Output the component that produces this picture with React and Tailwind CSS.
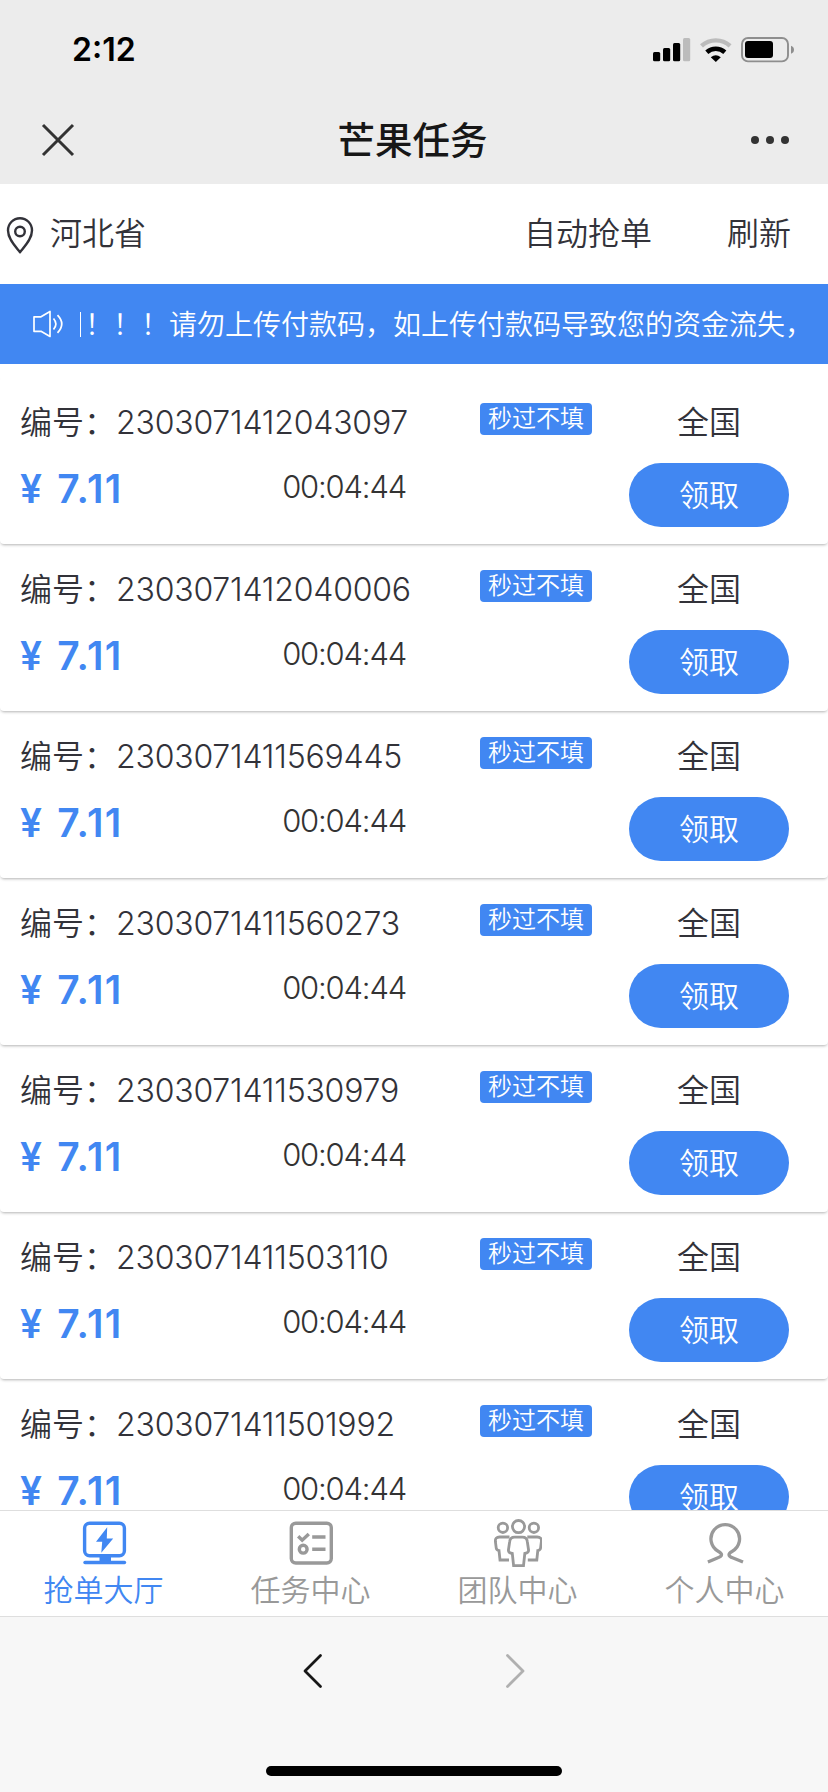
import React from 'react';

const orders = [
    { id: '2303071412043097', price: '7.11', time: '00:04:44' },
    { id: '2303071412040006', price: '7.11', time: '00:04:44' },
    { id: '2303071411569445', price: '7.11', time: '00:04:44' },
    { id: '2303071411560273', price: '7.11', time: '00:04:44' },
    { id: '2303071411530979', price: '7.11', time: '00:04:44' },
    { id: '2303071411503110', price: '7.11', time: '00:04:44' },
    { id: '2303071411501992', price: '7.11', time: '00:04:44' },
];

const HallIcon = () => (
    <svg width="48" height="48" viewBox="0 0 48 48" fill="none" stroke="currentColor" strokeWidth="3.4">
        <rect x="4.6" y="4.2" width="39.8" height="32.6" rx="5" />
        <path d="M27.2 8.3L16 22.7h6.2l-.9 11L33.2 19.6h-6.4z" fill="currentColor" stroke="none" />
        <path d="M19.5 37H31v5H19.5z" fill="currentColor" stroke="none" />
        <path d="M5 43.5h39.5" strokeLinecap="round" />
    </svg>
);

const TaskIcon = () => (
    <svg width="48" height="48" viewBox="0 0 48 48" fill="none" stroke="currentColor" strokeWidth="3.4">
        <rect x="4.3" y="4.2" width="40" height="39.8" rx="4.5" />
        <path d="M11.2 17.2l4 4 6.6-6.2M25.2 18h13.3M25.2 30.2h13.3" />
        <circle cx="16.2" cy="30.2" r="3.9" />
    </svg>
);

const TeamIcon = () => (
    <svg width="48" height="48" viewBox="0 0 48 48" fill="none" stroke="currentColor" strokeWidth="2.8">
        <circle cx="8.9" cy="8.8" r="4.7" />
        <circle cx="39.9" cy="8.8" r="4.7" />
        <circle cx="24.5" cy="7.6" r="6.1" />
        <path d="M15.5 18H5.6Q1 18 1.4 22.5l.8 6.3q.2 2.2 2.8 2.7l1 9.5h9" />
        <path d="M33.3 18h9.9q4.6 0 4.2 4.5l-.8 6.3q-.2 2.2-2.8 2.7l-1 9.5h-9" />
        <path d="M20.5 18.2h8q4.3 0 4.8 4.3l1.3 8.7q0 2.6-3.8 3.3L29.5 46.6H19.6l-1.3-12.1q-3.9-.7-3.9-3.3l1.3-8.7q.5-4.3 4.8-4.3z" />
    </svg>
);

const UserIcon = () => (
    <svg width="48" height="48" viewBox="0 0 48 48" fill="none" stroke="currentColor" strokeWidth="3.3">
        <path d="M6.9 43l9.4-4q4.3-1.4 4.2-3.3-.1-1.6-3-3.2A14.3 14.3 0 1 1 31 32.5q-3 1.6-3 3.2 0 1.9 4.2 3.3l9.8 4" />
    </svg>
);

const tabs = [
    { label: '抢单大厅', Icon: HallIcon },
    { label: '任务中心', Icon: TaskIcon },
    { label: '团队中心', Icon: TeamIcon },
    { label: '个人中心', Icon: UserIcon },
];

const StatusBar = () => (
    <div className="flex h-[98px] items-center justify-between pt-[2px] pl-[72px] pr-[33px] text-black">
        <span className="text-[32px] leading-[40px] font-semibold">2:12</span>
        <div className="flex items-center">
            <svg width="38" height="24" viewBox="0 0 38 24">
                <rect x="0" y="14" width="7.2" height="9.2" rx="1.5" />
                <rect x="10" y="10" width="7.2" height="13.2" rx="1.5" />
                <rect x="20" y="5" width="7.2" height="18.2" rx="1.5" />
                <rect x="30" y="0" width="7.2" height="23.2" rx="1.5" fill="#bcbcbc" />
            </svg>
            <svg className="ml-2" width="34" height="24" viewBox="0 0 34 24" fill="none">
                <path d="M2.5 7.8a21.5 21.5 0 0 1 28.6 0" stroke="#bcbcbc" strokeWidth="4.4" />
                <path d="M7.8 14.2a13.5 13.5 0 0 1 18 0" stroke="#000" strokeWidth="4.6" />
                <path d="M11.8 19.2q5-4 10 0L16.800 24z" fill="#000" />
            </svg>
            <svg className="ml-2" width="54" height="26" viewBox="0 0 54 26">
                <rect x="1" y="1" width="46" height="23.4" rx="6" fill="none" stroke="#8e8e8e" strokeWidth="1.9" />
                <rect x="4" y="4" width="28" height="17" rx="3" />
                <path d="M50 8.700q3 1.200 3 4t-3 4z" fill="#8e8e8e" />
            </svg>
        </div>
    </div>
);

const NavBar = () => (
    <div className="grid h-[86px] grid-cols-[1fr_auto_1fr] items-center px-[41px] pb-[3px]">
        <svg width="34" height="34" viewBox="0 0 34 34" stroke="#333" strokeWidth="3">
            <path d="M2 2l30 30M32 2L2 32" />
        </svg>
        <h1 className="mt-[2px] ml-[-3px] text-[37.5px] leading-[48px] font-medium text-[#171717]">芒果任务</h1>
        <svg className="mr-[-3px] justify-self-end" width="40" height="10" viewBox="0 0 40 10" fill="#333">
            <circle cx="5" cy="5" r="4" />
            <circle cx="20" cy="5" r="4" />
            <circle cx="35" cy="5" r="4" />
        </svg>
    </div>
);

const OrderCard = ({ order }) => (
    <div className="flex h-[167px] shrink-0 rounded pt-[26px] pl-[20px] shadow-[0_2px_3px_-1px_rgba(0,0,0,0.3)]">
        <div className="w-[387px] pt-px">
            <div className="flex text-[32px] leading-[38px] whitespace-nowrap text-[#323239]">
                <span className="w-[96px]">编号：</span>
                <span className="tracking-[-0.2px]">{order.id}</span>
            </div>
            <div className="mt-[22px] flex items-start justify-between">
                <span className="text-[39px] leading-[50px] font-semibold tracking-[1.5px] whitespace-pre text-[#4187f2] [word-spacing:2.5px]">¥ {order.price}</span>
                <span className="mt-[3px] mr-px text-[31px] leading-[40px] tracking-[-1.2px] text-[#333]">{order.time}</span>
            </div>
        </div>
        <div className="ml-[73px] h-[32px] w-[112px] rounded bg-[#4187f2] text-center text-[24px] leading-[32px] text-white">秒过不填</div>
        <div className="ml-[37px] flex w-[160px] flex-col items-center">
            <span className="mt-px text-[32px] leading-[38px] text-[#323239]">全国</span>
            <button className="mt-[21px] h-[64px] w-full rounded-full bg-[#4187f2] text-[30px] leading-[64px] text-white">领取</button>
        </div>
    </div>
);

const App = () => {
    const active = 0;

    return (
        <div className="flex h-[1792px] w-[828px] flex-col overflow-hidden bg-white font-['Inter','Noto_Sans_CJK_SC',sans-serif] font-[350]">
            <header className="h-[184px] shrink-0 bg-[#ececec]">
                <StatusBar />
                <NavBar />
            </header>

            {/* location + actions */}
            <div className="flex h-[100px] shrink-0 items-center pl-[6px] text-[32px] leading-[40px] text-[#323239]">
                <svg className="mt-[2px]" width="28" height="38" viewBox="0 0 28 38" fill="none" stroke="currentColor" strokeWidth="2.4">
                    <path d="M14 36.2C9.5 30.5 2 23 2 14.4a12 12.2 0 0 1 24 0C26 23 18.5 30.5 14 36.2z" strokeLinejoin="round" />
                    <circle cx="14" cy="15.5" r="4.8" />
                </svg>
                <span className="ml-4">河北省</span>
                <span className="ml-auto">自动抢单</span>
                <span className="mr-[37px] ml-[75px]">刷新</span>
            </div>

            {/* scrolling notice */}
            <div className="flex h-[80px] shrink-0 items-center bg-[#4187f2] pl-[32px] text-[28px] leading-[40px] text-white">
                <svg width="32" height="28" viewBox="0 0 32 28" fill="none" stroke="currentColor" strokeWidth="1.7">
                    <path d="M2 6.8h7L18 1.5v25L9 21.3H2z" strokeLinejoin="round" />
                    <path d="M21.5 8.5q4.8 5.5 0 11M25.5 5.2q8.5 8.8 0 17.6" />
                </svg>
                <div className="mt-px ml-[14px] flex w-[736px] items-center overflow-hidden whitespace-nowrap">
                    <i className="mr-[4px] ml-[2px] h-[25px] w-px shrink-0 bg-white"></i>
                    <span>！！！请勿上传付款码，如上传付款码导致您的资金流失，</span>
                </div>
            </div>

            <main className="flex min-h-0 flex-1 flex-col overflow-hidden pt-[13px]">
                {orders.map((order) => (
                    <OrderCard key={order.id} order={order} />
                ))}
            </main>

            <nav className="z-10 grid h-[107px] shrink-0 grid-cols-4 border-y border-[#dedede] bg-white">
                {tabs.map(({ label, Icon }, i) => (
                    <div key={label} className={`flex flex-col items-center pt-2 ${i === active ? 'text-[#4187f2]' : 'text-[#999]'}`}>
                        <Icon />
                        <span className="mt-1 text-[30px] leading-[38px]">{label}</span>
                    </div>
                ))}
            </nav>

            <footer className="flex h-[175px] shrink-0 flex-col items-center justify-between bg-[#f7f7f7] pt-[36px] pb-[16px]">
                <div className="flex gap-[182px]">
                    <svg width="20" height="36" viewBox="0 0 20 36" fill="none" stroke="#171717" strokeWidth="2.8" strokeLinecap="round" strokeLinejoin="round">
                        <path d="M17.5 2.5L2 18l15.5 15.5" />
                    </svg>
                    <svg width="20" height="36" viewBox="0 0 20 36" fill="none" stroke="#b0b0b0" strokeWidth="2.8" strokeLinecap="round" strokeLinejoin="round">
                        <path d="M2.5 2.5L18 18 2.5 33.5" />
                    </svg>
                </div>
                <div className="h-[10px] w-[296px] rounded-full bg-black"></div>
            </footer>
        </div>
    );
};

export default App;
